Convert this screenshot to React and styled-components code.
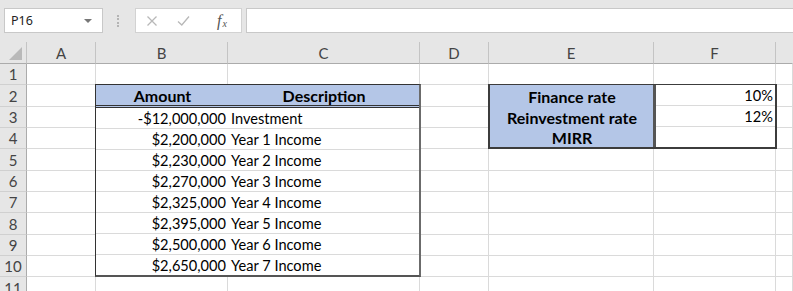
import React from "react";
import styled, { createGlobalStyle } from "styled-components";

const GlobalStyle = createGlobalStyle`
  html, body { margin: 0; padding: 0; background: #fff; }
  body { font-family: Lato, "Liberation Sans", sans-serif; color: #000; }
  * { box-sizing: border-box; }
`;

const LETTERS = ["A", "B", "C", "D", "E", "F", ""];
const ROWS = 11;
const GRIDLINE = "#dadada";
const BLUE = "#b4c6e7";

const amounts = [
  ["-$12,000,000", "Investment"],
  ["$2,200,000", "Year 1 Income"],
  ["$2,230,000", "Year 2 Income"],
  ["$2,270,000", "Year 3 Income"],
  ["$2,325,000", "Year 4 Income"],
  ["$2,395,000", "Year 5 Income"],
  ["$2,500,000", "Year 6 Income"],
  ["$2,650,000", "Year 7 Income"],
];

const rates = [
  ["Finance rate", "10%"],
  ["Reinvestment rate", "12%"],
  ["MIRR", ""],
];

const Window = styled.div`
  width: 793px;
  height: 291px;
  overflow: hidden;
  background: #fff;
  display: flex;
  flex-direction: column;
`;

const FormulaBar = styled.div`
  flex: none;
  height: 42px;
  background: #e6e6e6;
  display: flex;
  align-items: flex-start;
  padding: 8px 0 0 4px;
`;

const NameBox = styled.div`
  width: 99px;
  height: 25px;
  background: #fff;
  border: 1px solid #c8c8c8;
  display: flex;
  align-items: center;
  justify-content: space-between;
  padding: 0 10px 0 6px;
  font-family: "Noto Sans", sans-serif;
  font-size: 12.5px;
  color: #222;
`;

const Caret = styled.span`
  width: 0;
  height: 0;
  border-left: 4px solid transparent;
  border-right: 4px solid transparent;
  border-top: 4px solid #777;
`;

const Grip = styled.div`
  width: 2px;
  height: 12px;
  margin: 7px 16px 0 14px;
  border-left: 2px dotted #b4b4b4;
`;

const FxBox = styled.div`
  width: 107px;
  height: 25px;
  background: #fff;
  border: 1px solid #d2d2d2;
  display: flex;
  align-items: center;
  padding-left: 10px;
  gap: 19px;
  color: #b8b8b8;
`;

const Fx = styled.span`
  font-family: "Liberation Serif", serif;
  font-style: italic;
  font-size: 16px;
  line-height: 1;
  color: #555;
  margin-left: 8px;
  sub {
    font-size: 10px;
    vertical-align: -1px;
    margin-left: 1px;
  }
`;

const FormulaInput = styled.div`
  flex: 1;
  height: 25px;
  margin-left: 4px;
  background: #fff;
  border: 1px solid #c8c8c8;
  border-right: none;
`;

const Sheet = styled.div`
  display: grid;
  grid-template-columns: 27px 69px 132px 192px 69px 165px 122px 1fr;
  grid-template-rows: 22px repeat(${ROWS}, 21.35px);
  font-size: 14.6px;
`;

const ColHead = styled.div`
  grid-row: 1;
  background: #e6e6e6;
  border-bottom: 1px solid #ababab;
  border-right: 1px solid ${(p) => (p.$last ? "transparent" : "#c4c4c4")};
  display: flex;
  align-items: center;
  justify-content: center;
  color: #444;
  font-size: 15px;
  padding-top: 1px;
`;

const Corner = styled(ColHead)`
  position: relative;
  &::after {
    content: "";
    position: absolute;
    right: 4px;
    bottom: 3px;
    border-left: 13px solid transparent;
    border-bottom: 13px solid #b9b9b9;
  }
`;

const RowHead = styled.div`
  grid-column: 1;
  background: #e6e6e6;
  border-right: 1px solid #ababab;
  border-bottom: 1px solid #d0d0d0;
  display: flex;
  align-items: flex-end;
  justify-content: center;
  color: #444;
  font-size: 15px;
  line-height: 19px;
`;

const Cell = styled.div`
  border-right: 1px solid ${GRIDLINE};
  border-bottom: 1px solid ${GRIDLINE};
`;

const AmountTable = styled.div`
  grid-column: 3 / 5;
  grid-row: 3 / 12;
  margin: -1px -1px 0 -1px;
  display: flex;
  flex-direction: column;
  background: #fff;
  border-left: 1px solid #333;
  border-top: 1px solid #333;
  border-right: 2px solid #6b6b6b;
  border-bottom: 2px solid #555;
`;

const TableRow = styled.div`
  flex: 1;
  display: grid;
  grid-template-columns: 132px 1fr;
  background: ${(p) => (p.$head ? BLUE : "#fff")};
  border-bottom: ${(p) => (p.$head ? "3px double #333" : `1px solid ${GRIDLINE}`)};
  &:last-child {
    border-bottom: none;
  }
`;

const Text = styled.div`
  display: flex;
  align-items: flex-end;
  justify-content: ${(p) => p.$align || "flex-start"};
  padding: 0 2px 0 3px;
  font-weight: ${(p) => (p.$bold ? 700 : 400)};
  font-size: ${(p) => (p.$bold ? "16px" : "inherit")};
  line-height: 18px;
  white-space: nowrap;
`;

const RateTable = styled.div`
  grid-column: 6 / 8;
  grid-row: 3 / 6;
  margin: -1px -1px 0 -1px;
  display: grid;
  grid-template-columns: 166px 1fr;
  grid-auto-rows: 1fr;
  background: #fff;
  border: 2px solid #3c3c3c;
  border-top-width: 1.5px;
`;

const RateLabel = styled(Text)`
  background: ${BLUE};
  border-right: 3px solid #555;
`;

const RateValue = styled(Text)`
  border-bottom: 1px solid ${(p) => (p.$last ? "transparent" : GRIDLINE)};
`;

const CrossIcon = () => (
  <svg width="12" height="12" viewBox="0 0 12 12">
    <path d="M1.5 1.5 L10.5 10.5 M10.5 1.5 L1.5 10.5" stroke="#b8b8b8" strokeWidth="1.3" fill="none" />
  </svg>
);

const CheckIcon = () => (
  <svg width="13" height="12" viewBox="0 0 13 12">
    <path d="M1 6.5 L4.8 10 L12 1.5" stroke="#b8b8b8" strokeWidth="1.3" fill="none" />
  </svg>
);

export default function App() {
  const gridCells = [];
  for (let r = 1; r <= ROWS; r++) {
    gridCells.push(<RowHead key={`h${r}`} style={{ gridRow: r + 1 }}>{r}</RowHead>);
    for (let c = 0; c < LETTERS.length; c++) {
      gridCells.push(<Cell key={`c${r}-${c}`} style={{ gridRow: r + 1, gridColumn: c + 2 }} />);
    }
  }

  return (
    <Window>
      <GlobalStyle />
      <FormulaBar>
        <NameBox>
          P16
          <Caret />
        </NameBox>
        <Grip />
        <FxBox>
          <CrossIcon />
          <CheckIcon />
          <Fx>
            f<sub>x</sub>
          </Fx>
        </FxBox>
        <FormulaInput />
      </FormulaBar>
      <Sheet>
        <Corner />
        {LETTERS.map((l, i) => (
          <ColHead key={i} $last={i === LETTERS.length - 1}>
            {l}
          </ColHead>
        ))}
        {gridCells}
        <AmountTable>
          <TableRow $head>
            <Text $bold $align="center">Amount</Text>
            <Text $bold $align="center">Description</Text>
          </TableRow>
          {amounts.map(([amt, desc]) => (
            <TableRow key={desc}>
              <Text $align="flex-end">{amt}</Text>
              <Text>{desc}</Text>
            </TableRow>
          ))}
        </AmountTable>
        <RateTable>
          {rates.map(([label, value], i) => (
            <React.Fragment key={label}>
              <RateLabel $bold $align="center">{label}</RateLabel>
              <RateValue $align="flex-end" $last={i === rates.length - 1}>
                {value}
              </RateValue>
            </React.Fragment>
          ))}
        </RateTable>
      </Sheet>
    </Window>
  );
}
